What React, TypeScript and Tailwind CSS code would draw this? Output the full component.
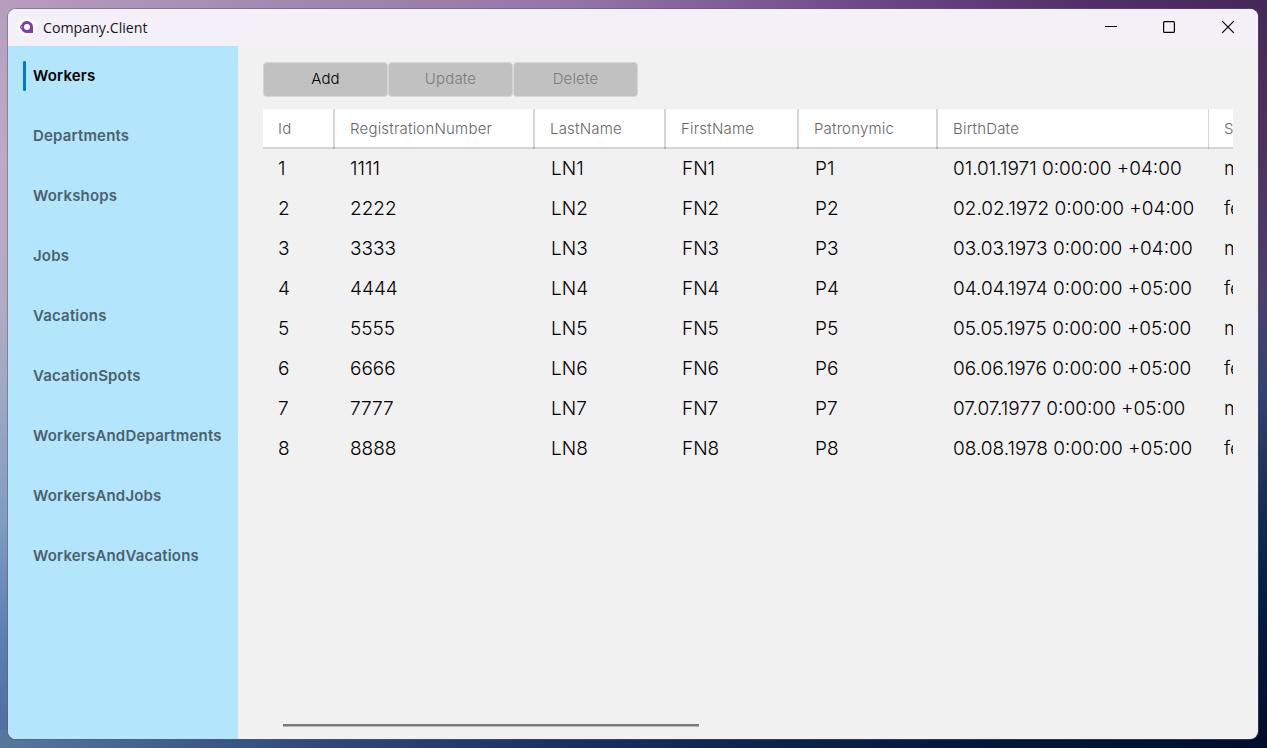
const nav = ["Workers", "Departments", "Workshops", "Jobs", "Vacations", "VacationSpots", "WorkersAndDepartments", "WorkersAndJobs", "WorkersAndVacations"];

const columns = [
  { title: "Id", cell: "w-[72px]", divider: "border-r-2", text: "" },
  { title: "RegistrationNumber", cell: "w-[200px]", divider: "border-r-2", text: "" },
  { title: "LastName", cell: "w-[131px]", divider: "border-r-2", text: "pl-px" },
  { title: "FirstName", cell: "w-[133px]", divider: "border-r-2", text: "pl-px" },
  { title: "Patronymic", cell: "w-[139px]", divider: "border-r-2", text: "pl-px" },
  { title: "BirthDate", cell: "w-[271px]", divider: "border-r", text: "" },
  { title: "Sex", cell: "w-[100px]", divider: "border-r-2", text: "" },
];

const rows = [1, 2, 3, 4, 5, 6, 7, 8].map((n) => [
  `${n}`,
  `${n}`.repeat(4),
  `LN${n}`,
  `FN${n}`,
  `P${n}`,
  `0${n}.0${n}.197${n} 0:00:00 +0${n < 4 ? 4 : 5}:00`,
  n % 2 ? "male" : "female",
]);

function Logo() {
  return (
    <svg width="18" height="18" viewBox="0 0 18 18">
      <circle cx="9" cy="9" r="9" fill="#fff" />
      <path d="M9 3a6 6 0 0 0-5.6 4A2.1 2.1 0 0 0 3.4 11 6 6 0 0 0 9 15h6V9a6 6 0 0 0-6-6Z" fill="#803ca5" />
      <circle cx="9" cy="9" r="3" fill="#fff" />
      <circle cx="3.7" cy="9" r="0.9" fill="#b58aca" />
    </svg>
  );
}

export default function App() {
  return (
    <div className="h-[748px] w-[1267px] overflow-hidden bg-[linear-gradient(to_right,#b79dbe_0%,#a38bb5_20%,#9376a9_45%,#6c4584_70%,#53306a_85%,#452759_100%),linear-gradient(to_right,#56789f_0%,#304b7b_24%,#17305f_45%,#021a3c_75%,#000d2c_100%),linear-gradient(#b59fc0_0%,#bda9c2_20%,#b5abc2_38%,#a3aac3_50%,#7f9cc2_70%,#5c80b2_85%,#4c6c9c_100%),linear-gradient(#452759_0%,#50305f_18%,#4b3f72_40%,#314374_52%,#173059_66%,#021d48_80%,#000d2c_100%)] bg-[position:top,bottom,left,right] bg-[size:100%_18px,100%_18px,16px_100%,18px_100%] bg-no-repeat px-2 pt-[9px] font-[Inter,sans-serif]">
      <div className="flex h-[730px] w-[1250px] flex-col overflow-hidden rounded-lg bg-[#f1f1f1] shadow-[0_0_0_1px_rgba(90,90,105,0.5)]">
        <header className="flex h-[37px] shrink-0 items-center bg-[#f4f0f8] pb-px pl-[10px]">
          <Logo />
          <span className="ml-[7px] pt-0.5 font-['Open_Sans',sans-serif] text-[14.2px] leading-5 text-[#171519]">Company.Client</span>
          <div className="ml-auto flex pr-[23px] text-black">
            <svg width="130" height="14" viewBox="0 0 130 14" fill="none" stroke="currentColor">
              <path d="M0 6.5h12" />
              <rect x="58.6" y="1.6" width="10.8" height="10.8" rx="1" strokeWidth="1.2" />
              <path d="m117.2 1.2 11.6 11.6m0-11.6-11.6 11.6" strokeWidth="1.2" />
            </svg>
          </div>
        </header>
        <div className="flex min-h-0 flex-1">
          <nav className="w-[230px] shrink-0 bg-[#b3e5fc]">
            {nav.map((label, i) => (
              <div key={label} className="flex h-[60px] items-center pl-[15px]">
                <span className={i === 0 ? "h-[30px] w-[3px] rounded-[1px] bg-[#0078d7]" : "h-[30px] w-[3px]"} />
                <span className={i === 0 ? "ml-[7px] text-[15px] font-semibold tracking-[0.18px] text-black" : "ml-[7px] text-[15px] font-semibold tracking-[0.18px] text-[#4b626c]"}>{label}</span>
              </div>
            ))}
          </nav>
          <main className="flex min-w-0 flex-1 flex-col pr-[25px] pl-[25px] pt-4">
            <div className="flex">
              {["Add", "Update", "Delete"].map((label) => (
                <button key={label} disabled={label !== "Add"} className="h-[35px] w-[125px] rounded border border-[#d6d6d6] bg-[#c1c1c1] pb-px text-[15px] font-light tracking-[0.17px] text-black disabled:text-[#7b7b7b]">
                  {label}
                </button>
              ))}
            </div>
            <div className="mt-3 flex-1 overflow-hidden">
              <div className="w-[1046px]">
                <div className="flex h-10 border-b-2 border-[#d4d4d4] bg-white">
                  {columns.map((c) => (
                    <div key={c.title} className={`${c.cell} ${c.divider} flex h-10 shrink-0 items-center border-[#00000029] pl-[15px] text-[15px] font-light tracking-[0.2px] text-[#666]`}>
                      {c.title}
                    </div>
                  ))}
                </div>
                {rows.map((r) => (
                  <div key={r[0]} className="flex h-10">
                    {r.map((v, i) => (
                      <div key={i} className={`${columns[i].cell} flex shrink-0 items-center pl-[15px] text-[19px] font-light whitespace-nowrap text-black`}>
                        <span className={columns[i].text}>{v}</span>
                      </div>
                    ))}
                  </div>
                ))}
              </div>
            </div>
            <div className="mb-3 ml-5 h-[3px] w-[416px] border-b border-[#b8b8b8] bg-[#7a7a7a]" />
          </main>
        </div>
      </div>
    </div>
  );
}
